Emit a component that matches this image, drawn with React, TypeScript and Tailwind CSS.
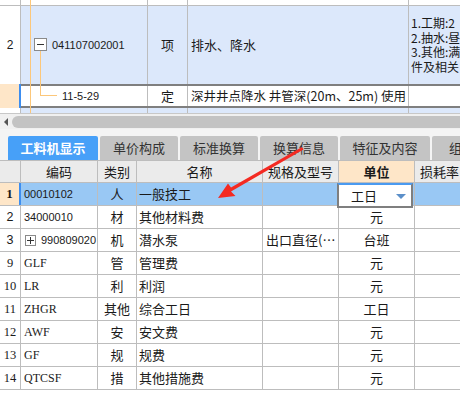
import React from "react";

const FONT = { fontFamily: '"Noto Sans CJK SC", "Liberation Sans", sans-serif' };
const SANS = { fontFamily: '"Liberation Sans", "Noto Sans CJK SC", sans-serif' };
const SERIF = { fontFamily: '"Liberation Serif", "Noto Sans CJK SC", serif' };

const rows = [
  { n: "1", code: "00010102", cat: "人", name: "一般技工", spec: "", unit: "工日", sel: true },
  { n: "2", code: "34000010", cat: "材", name: "其他材料费", spec: "", unit: "元" },
  { n: "3", code: "990809020", cat: "机", name: "潜水泵", spec: "出口直径(…", unit: "台班", plus: true },
  { n: "9", code: "GLF", cat: "管", name: "管理费", spec: "", unit: "元", serif: true },
  { n: "10", code: "LR", cat: "利", name: "利润", spec: "", unit: "元", serif: true },
  { n: "11", code: "ZHGR", cat: "其他", name: "综合工日", spec: "", unit: "工日", serif: true },
  { n: "12", code: "AWF", cat: "安", name: "安文费", spec: "", unit: "元", serif: true },
  { n: "13", code: "GF", cat: "规", name: "规费", spec: "", unit: "元", serif: true },
  { n: "14", code: "QTCSF", cat: "措", name: "其他措施费", spec: "", unit: "元", serif: true },
];

const tabs = [
  { t: "工料机显示", w: "w-[90px]", active: true },
  { t: "单价构成", w: "w-[78px]" },
  { t: "标准换算", w: "w-[78px]" },
  { t: "换算信息", w: "w-[78px]" },
  { t: "特征及内容", w: "w-[90px]" },
  { t: "组合", w: "w-[60px]" },
];

export default function App() {
  return (
    <div className="relative w-[460px] h-[398px] overflow-hidden bg-white text-[13px] text-[#1a1a1a]" style={FONT}>
      {/* Top table */}
      <div className="relative h-[113px] bg-[#dce8fb]">
        <div className="flex h-[6px] bg-white border-b border-[#bdbdbd]">
          <div className="w-[21px] border-r border-[#bdbdbd]" />
          <div className="w-[127px] border-r border-[#bdbdbd]" />
          <div className="w-[40px] border-r border-[#bdbdbd]" />
          <div className="w-[221px] border-r border-[#bdbdbd]" />
          <div className="flex-1" />
        </div>
        <div className="flex h-[78px]">
          <div className="w-[21px] bg-white border-r border-[#bdbdbd] flex items-center justify-center text-[12px]" style={SANS}>2</div>
          <div className="w-[127px] border-r border-[#bdbdbd] flex items-center pl-[31px] text-[11px]" style={SANS}>041107002001</div>
          <div className="w-[40px] border-r border-[#bdbdbd] flex items-center justify-center">项</div>
          <div className="w-[221px] border-r border-[#bdbdbd] flex items-center pl-[3px]">排水、降水</div>
          <div className="flex-1 min-w-0 flex flex-col justify-center pl-[2px] text-[12px] leading-[14.5px] whitespace-nowrap overflow-hidden">
            <div className="h-[14.5px] overflow-hidden">1.工期:2</div>
            <div className="h-[14.5px] overflow-hidden">2.抽水:昼</div>
            <div className="h-[14.5px] overflow-hidden">3.其他:满</div>
            <div className="h-[14.5px] overflow-hidden">件及相关</div>
          </div>
        </div>
        <div className="flex h-[24px]">
          <div className="w-[21px] bg-[#fee6c8] border-r-2 border-r-[#3d8ef0]" />
          <div className="flex-1 flex bg-white border-y-2 border-[#7f7f7f]">
            <div className="w-[127px] border-r border-[#bdbdbd] flex items-center pl-[41px] text-[11px]" style={SANS}>11-5-29</div>
            <div className="w-[40px] border-r border-[#bdbdbd] flex items-center justify-center">定</div>
            <div className="w-[221px] border-r border-[#bdbdbd] flex items-center pl-[3px] whitespace-nowrap overflow-hidden text-[12.5px]">深井井点降水 井管深(20m、25m) 使用</div>
            <div className="flex-1" />
          </div>
        </div>
        <div className="flex h-[5px]">
          <div className="w-[21px] bg-white border-r border-[#bdbdbd]" />
          <div className="w-[127px] border-r border-[#bdbdbd]" />
          <div className="w-[40px] border-r border-[#bdbdbd]" />
          <div className="w-[221px] border-r border-[#bdbdbd]" />
          <div className="flex-1" />
        </div>
        <div className="absolute left-[30px] top-0 w-px h-[113px] bg-[#fcc77a]" />
        <div className="absolute left-[40px] top-[51px] w-px h-[44px] bg-[#fcc77a]" />
        <div className="absolute left-[40px] top-[95px] w-[17px] h-px bg-[#fcc77a]" />
        <div className="absolute left-[34px] top-[38px] w-[13px] h-[13px] bg-white border border-[#8a8a8a] flex items-center justify-center">
          <div className="w-[7px] h-px bg-[#333]" />
        </div>
      </div>

      {/* Scrollbar */}
      <div className="h-[16px] bg-[#f0f0f0] border-t border-[#c8c8c8] flex items-center">
        <div className="w-[12px] flex items-center justify-center">
          <div className="w-0 h-0 border-y-[4px] border-y-transparent border-r-[4px] border-r-[#555]" />
        </div>
        <div className="flex-1 h-[12px] rounded-l-[6px] bg-[#c3c3c3]" />
      </div>

      {/* gap & tabs */}
      <div className="h-[31px] bg-[#f4f4f4] flex items-end pl-[8px] gap-[2px]">
        {tabs.map((t) => (
          <div
            key={t.t}
            className={`${t.w} shrink-0 h-[24px] flex items-center justify-center text-[13px] rounded-t-[2px] whitespace-nowrap overflow-hidden ${
              t.active ? "bg-[#47a0f8] text-white font-bold" : "bg-[#c4c4c4] text-[#333]"
            }`}
          >
            {t.t}
          </div>
        ))}
      </div>

      {/* Bottom table */}
      <div className="bg-white">
        <div className="flex h-[23px] bg-[#ebebeb] border-y border-[#bdbdbd]">
          <div className="w-[21px] border-r border-[#bdbdbd]" />
          <div className="w-[77px] border-r border-[#bdbdbd] flex items-center justify-center">编码</div>
          <div className="w-[39px] border-r border-[#bdbdbd] flex items-center justify-center">类别</div>
          <div className="w-[126px] border-r border-[#bdbdbd] flex items-center justify-center">名称</div>
          <div className="w-[76px] border-r border-[#bdbdbd] flex items-center justify-center whitespace-nowrap">规格及型号</div>
          <div className="w-[76px] border-r border-[#bdbdbd] bg-[#fee6c8] flex items-center justify-center font-bold">单位</div>
          <div className="flex-1 flex items-center pl-[5px] whitespace-nowrap overflow-hidden">损耗率</div>
        </div>
        {rows.map((r) => (
          <div key={r.n} className={`flex h-[23px] border-b border-[#bdbdbd] ${r.sel ? "bg-[#99c8f4]" : "bg-white"}`}>
            <div
              className={`w-[21px] border-r flex items-center justify-center ${
                r.sel ? "bg-[#fee6c8] font-bold border-r-2 border-r-[#3d8ef0] text-[13px]" : "border-[#bdbdbd] text-[12.5px]"
              }`}
              style={r.sel || r.serif ? SERIF : SANS}
            >
              {r.n}
            </div>
            <div
              className={`w-[77px] border-r border-[#bdbdbd] flex items-center pl-[3px] whitespace-nowrap overflow-hidden ${r.serif ? "text-[12px]" : "text-[11px]"}`}
              style={r.serif ? SERIF : SANS}
            >
              {r.plus && (
                <div className="w-[11px] h-[11px] border border-[#8a8a8a] bg-white mr-[5px] ml-[1px] shrink-0 flex items-center justify-center relative">
                  <div className="w-[7px] h-px bg-[#333]" />
                  <div className="absolute w-px h-[7px] bg-[#333]" />
                </div>
              )}
              {r.code}
            </div>
            <div className="w-[39px] border-r border-[#bdbdbd] flex items-center justify-center">{r.cat}</div>
            <div className="w-[126px] border-r border-[#bdbdbd] flex items-center pl-[2px] whitespace-nowrap">{r.name}</div>
            <div className="w-[76px] border-r border-[#bdbdbd] flex items-center pl-[3px] whitespace-nowrap overflow-hidden">{r.spec}</div>
            <div className="w-[76px] border-r border-[#bdbdbd] flex items-center justify-center relative">
              {r.sel ? (
                <div className="absolute left-[-2px] top-0 w-[76px] h-[25px] bg-white border-2 border-[#7f7f7f] border-t-[#4a9af0] flex items-center pl-[12px]">
                  工日
                  <div className="absolute right-[5px] top-[9px] w-0 h-0 border-x-[5px] border-x-transparent border-t-[5px] border-t-[#5b8fc9]" />
                </div>
              ) : (
                r.unit
              )}
            </div>
            <div className="flex-1" />
          </div>
        ))}
      </div>

      {/* Red arrow */}
      <svg className="absolute left-0 top-0 pointer-events-none" width="460" height="398">
        <polygon points="302,147 303.5,149.5 231,191.5 235.5,196 218,198 228,183.5 231,187.5" fill="#f42a22" />
      </svg>
    </div>
  );
}
